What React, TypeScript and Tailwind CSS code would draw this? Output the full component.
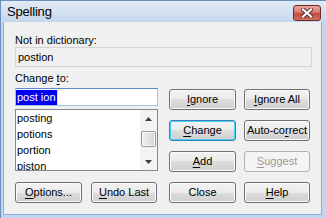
import React from "react"

const btnBase = "h-[21px] flex items-center justify-center rounded-[3px] border text-[11px] leading-none"
const btnNormal =
  "text-black border-[#707070] bg-[linear-gradient(to_bottom,#f2f2f2_0%,#ebebeb_50%,#dddddd_50%,#cfcfcf_100%)] shadow-[inset_0_0_0_1px_#fbfbfb]"
const btnDefault =
  "text-black border-[#3c7fb1] bg-[linear-gradient(to_bottom,#f2f2f2_0%,#ebebeb_50%,#dddddd_50%,#cfcfcf_100%)] shadow-[inset_0_0_0_1px_#48d3f6]"
const btnDisabled = "text-[#9a9a9a] border-[#adb2b5] bg-[#f4f4f4]"

function Btn({
  children,
  w,
  kind = "normal",
}: {
  children: React.ReactNode
  w: string
  kind?: "normal" | "default" | "disabled"
}) {
  const k = kind === "default" ? btnDefault : kind === "disabled" ? btnDisabled : btnNormal
  return <div className={`${btnBase} ${k} ${w}`}>{children}</div>
}

function U({ children }: { children: React.ReactNode }) {
  return <span className="underline decoration-1 underline-offset-[2px]">{children}</span>
}

function Arrow({ up }: { up?: boolean }) {
  return (
    <svg width="7" height="4" viewBox="0 0 7 4">
      {up ? <polygon points="3.5,0 7,4 0,4" fill="#3f3f3f" /> : <polygon points="0,0 7,0 3.5,4" fill="#3f3f3f" />}
    </svg>
  )
}

export default function App() {
  const words = ["posting", "potions", "portion", "piston"]
  return (
    <div className="w-[326px] h-[218px] overflow-hidden bg-[#c2d7ef] border-l border-t border-[#6b8fbf] font-['Liberation_Sans',Arial,sans-serif] text-black">
      {/* title bar */}
      <div className="h-[21px] flex items-center pl-[6px] pr-[5px] bg-[linear-gradient(to_bottom,#e2ebf6_0%,#d3e1f1_50%,#c3d7ee_100%)]">
        <span className="text-[13px] leading-none tracking-[-0.2px] text-black">Spelling</span>
        <div className="ml-auto mt-[2px] w-[28px] h-[16px] rounded-[3px] border border-[#6e2a23] bg-[linear-gradient(to_bottom,#e9a99f_0%,#d37a6d_45%,#c24a3b_55%,#d2705f_100%)] flex items-center justify-center">
          <svg width="12" height="10" viewBox="0 0 12 10">
            <path d="M2 1.5 L10 8.5 M10 1.5 L2 8.5" stroke="#5a2a2a" strokeWidth="4" strokeLinecap="square" />
            <path d="M2 1.5 L10 8.5 M10 1.5 L2 8.5" stroke="#ffffff" strokeWidth="2.2" strokeLinecap="square" />
          </svg>
        </div>
      </div>

      {/* body */}
      <div className="ml-[2px] mr-[4px] h-[193px] bg-[#f0f0f0] border border-t-0 border-[#8db0da] pl-[11px] pt-[12px] text-[11px]">
        <div className="h-[13px] leading-[13px]">Not in dictionary:</div>
        <div className="w-[297px] h-[20px] border border-[#d3d3d3] flex items-center pl-[2px]">postion</div>

        <div className="flex mt-[5px]">
          <div className="w-[143px] flex flex-col">
            <div className="h-[13px] leading-[13px]">
              Change <U>t</U>o:
            </div>
            <div className="mt-[3px] h-[18px] border border-[#a4c3e3] border-t-[#5d8cc4] bg-white flex items-center">
              <span className="h-[15px] leading-[15px] bg-[#0000f0] text-white pl-[1px] pr-[1px]">post ion</span>
              <span className="w-[1px] h-[15px] bg-[#ffff00]" />
            </div>
            <div className="mt-[3px] h-[62px] border border-[#828790] bg-white flex overflow-hidden">
              <div className="flex-1 pl-[1px]">
                {words.map((w) => (
                  <div key={w} className="h-[16px] leading-[16px]">
                    {w}
                  </div>
                ))}
              </div>
              <div className="w-[17px] h-full bg-[#f3f3f3] flex flex-col items-center">
                <div className="h-[17px] flex items-center justify-center">
                  <Arrow up />
                </div>
                <div className="mt-[4px] w-[15px] h-[16px] rounded-[2px] border border-[#979797] bg-[linear-gradient(to_right,#f4f4f4,#e2e2e2_50%,#d6d6d6)] shadow-[inset_0_0_0_1px_#fafafa]" />
                <div className="mt-auto h-[17px] flex items-center justify-center">
                  <Arrow />
                </div>
              </div>
            </div>
            <div className="mt-[11px] flex gap-[9px]">
              <Btn w="w-[67px]">
                <U>O</U>ptions...
              </Btn>
              <Btn w="w-[66px]">
                <U>U</U>ndo Last
              </Btn>
            </div>
          </div>

          <div className="ml-[11px] pt-[17px] grid grid-cols-[67px_66px] gap-x-[8px] gap-y-[10px] content-start">
            <Btn w="w-[67px]">
              <U>I</U>gnore
            </Btn>
            <Btn w="w-[66px]">
              <U>I</U>gnore All
            </Btn>
            <Btn w="w-[67px]" kind="default">
              <U>C</U>hange
            </Btn>
            <Btn w="w-[66px]">
              Auto-co<U>r</U>rect
            </Btn>
            <Btn w="w-[67px]">
              <U>A</U>dd
            </Btn>
            <Btn w="w-[66px]" kind="disabled">
              <U>S</U>uggest
            </Btn>
            <Btn w="w-[67px]">Close</Btn>
            <Btn w="w-[66px]">
              <U>H</U>elp
            </Btn>
          </div>
        </div>
      </div>
    </div>
  )
}
